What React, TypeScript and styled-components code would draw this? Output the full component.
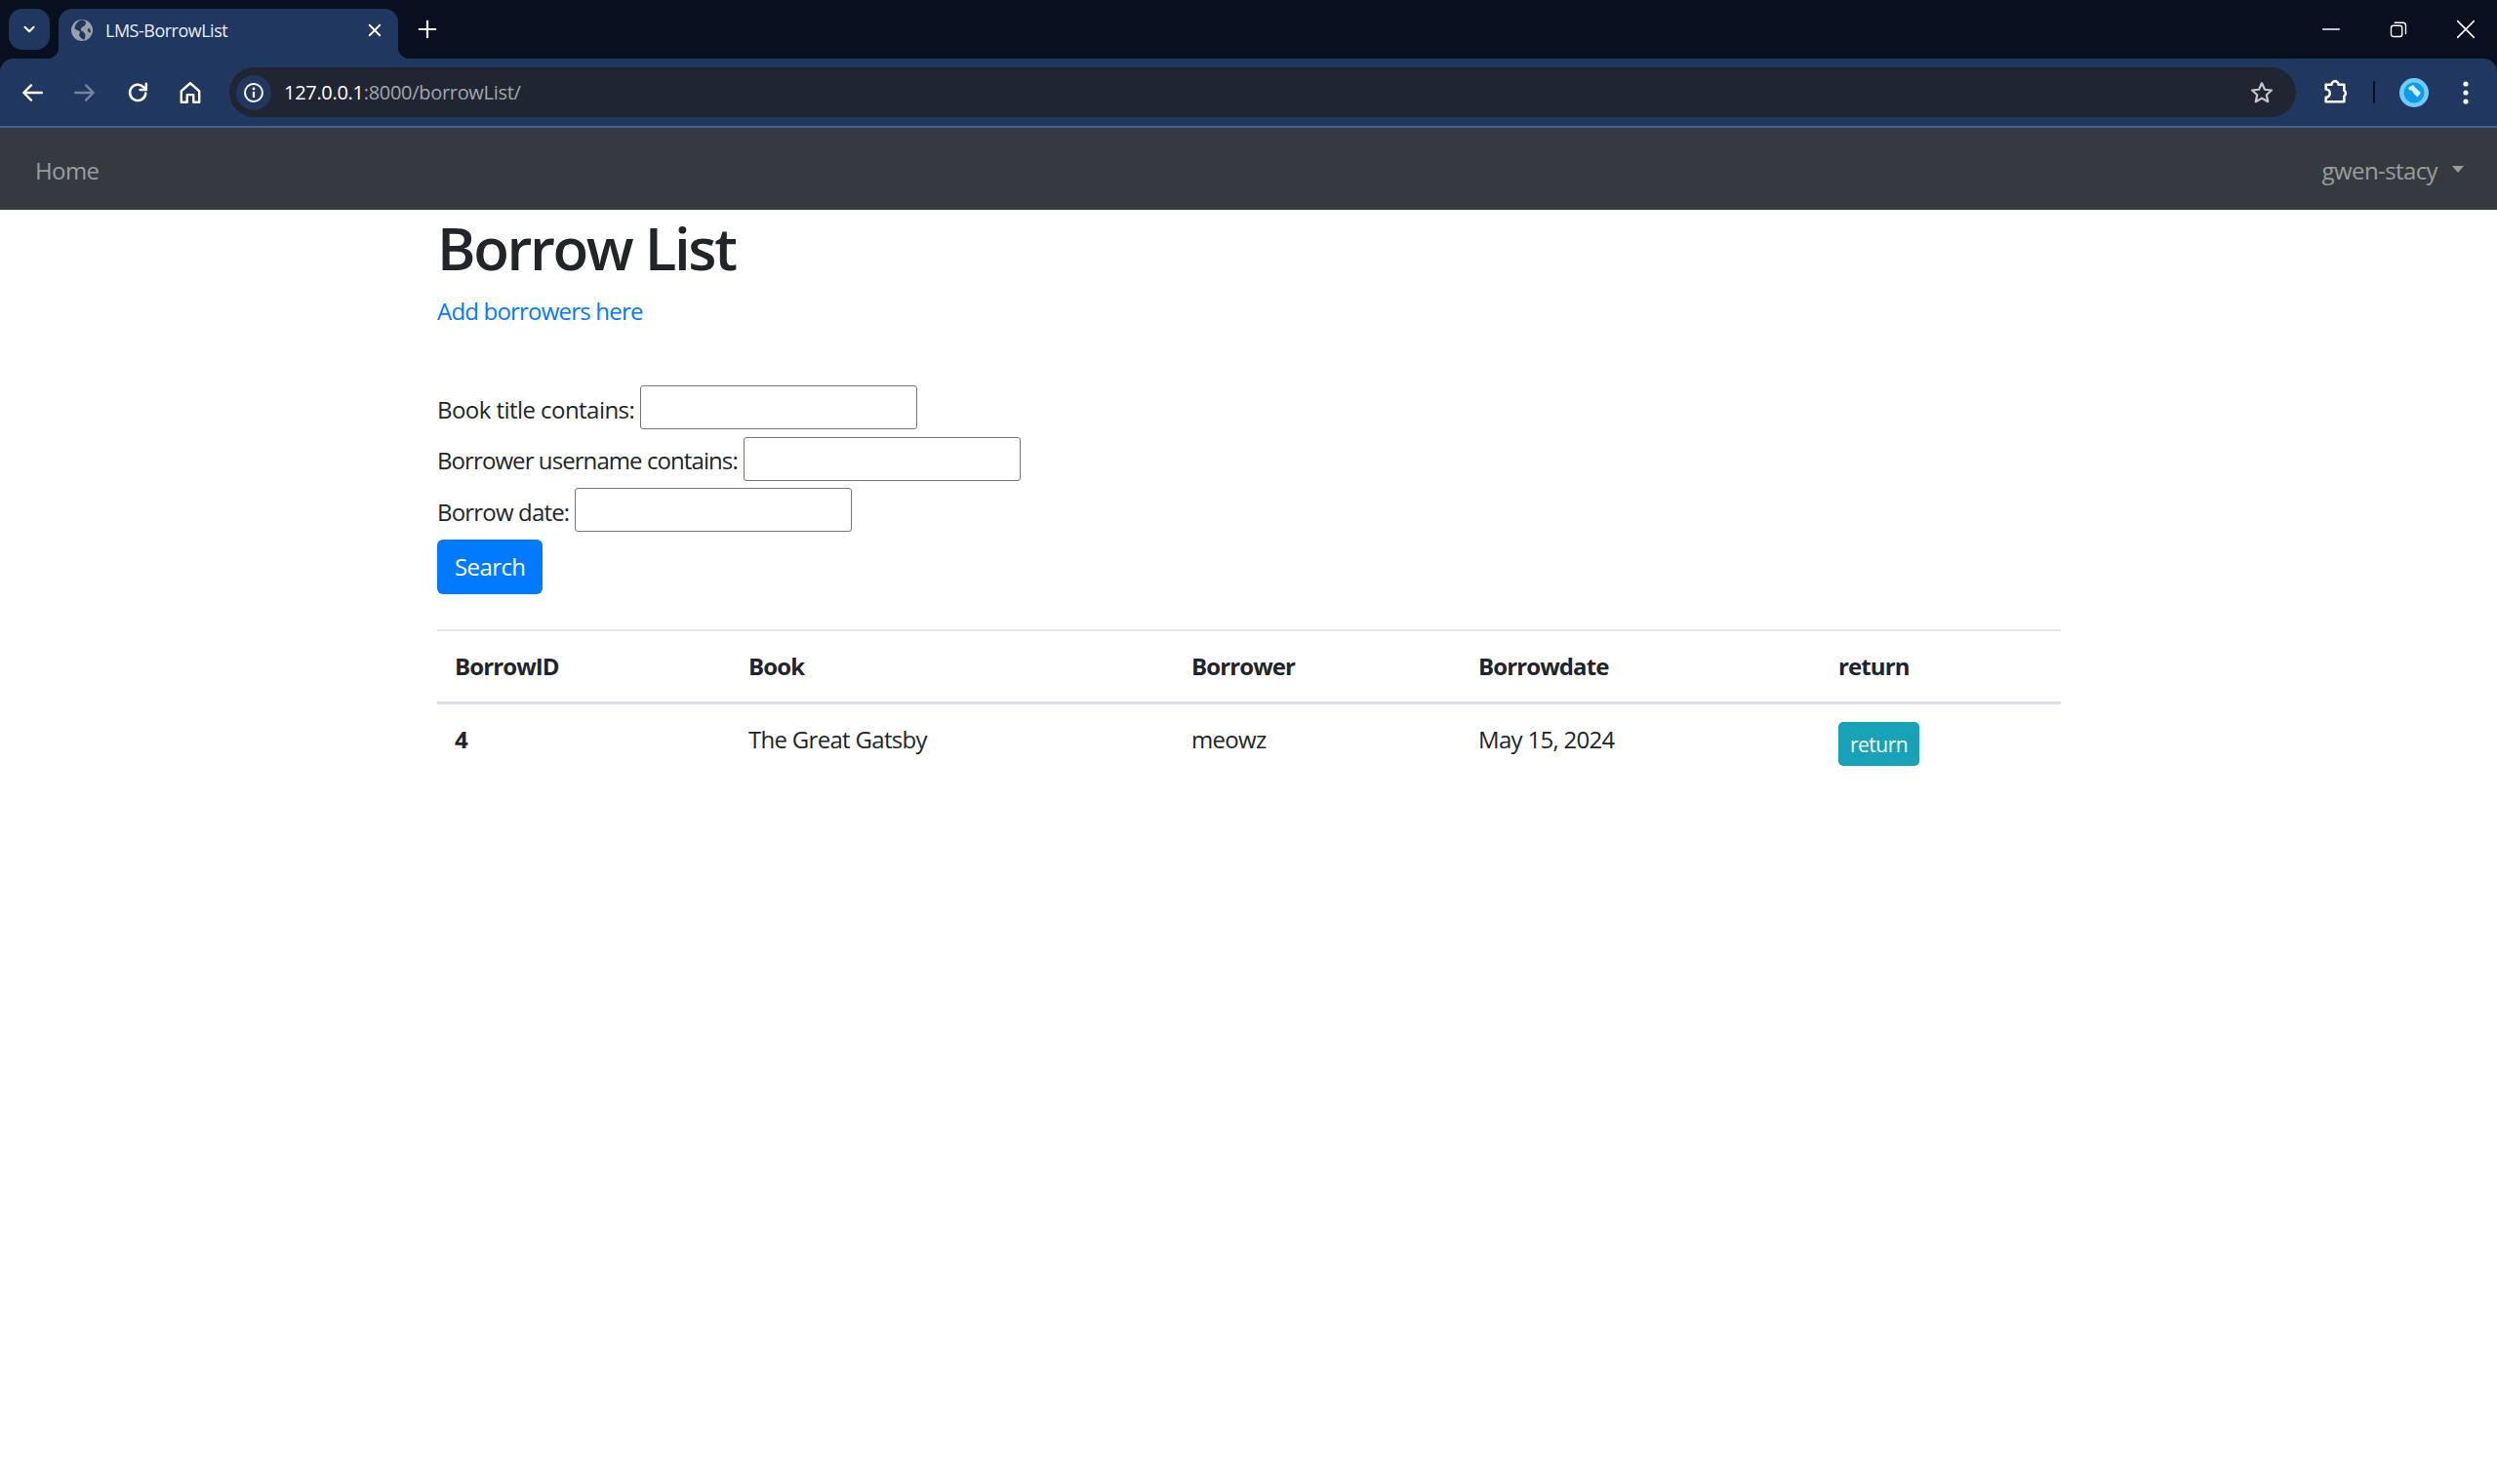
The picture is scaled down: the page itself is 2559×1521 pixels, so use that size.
import React from 'react';
import styled, { createGlobalStyle } from 'styled-components';

const GlobalStyle = createGlobalStyle`
   html, body {
      margin: 0;
      padding: 0;
      background: #fff;
   }

   body {
      font-family: "Open Sans", "Noto Sans", sans-serif;
      font-size: 24px;
      line-height: 36px;
      color: #212529;
   }
`;

const TabStrip = styled.div`
   height: 60px;
   display: flex;
   align-items: flex-start;
   padding: 9px 0 0 9px;
   box-sizing: border-box;
   background: #080f1e;
   color: #fff;
`;

const TabSearchButton = styled.div`
   width: 42px;
   height: 42px;
   display: flex;
   align-items: center;
   justify-content: center;
   background: #20375f;
   border-radius: 14px;
   margin-right: 9px;
`;

const Tab = styled.div`
   width: 348px;
   height: 51px;
   display: flex;
   align-items: center;
   box-sizing: border-box;
   padding: 0 15px 8px 13px;
   background: #20375f;
   border-radius: 14px 14px 0 0;
   position: relative;

   &::before, &::after {
      content: '';
      position: absolute;
      bottom: 0;
      width: 12px;
      height: 12px;
   }

   &::before {
      left: -12px;
      background: radial-gradient(circle at 0 0, transparent 12px, #20375f 12.5px);
   }

   &::after {
      right: -12px;
      background: radial-gradient(circle at 100% 0, transparent 12px, #20375f 12.5px);
   }
`;

const TabTitle = styled.span`
   flex: 1;
   margin-left: 13px;
   font-size: 18px;
   line-height: 22px;
   letter-spacing: -0.5px;
   color: #e8ecf4;
`;

const NewTabButton = styled.div`
   width: 36px;
   height: 42px;
   margin-left: 12px;
   display: flex;
   align-items: center;
   justify-content: center;
`;

const WindowControls = styled.div`
   margin-left: auto;
   display: flex;
   align-items: center;
   height: 42px;
`;

const WindowButton = styled.div`
   width: 69px;
   box-sizing: border-box;
   padding-left: 4px;
   display: flex;
   justify-content: center;
`;

const Toolbar = styled.div`
   height: 71px;
   display: flex;
   align-items: flex-start;
   box-sizing: border-box;
   padding: 9px 5px 0 6px;
   background: #20375f;
   border-bottom: 2px solid #47618f;
   border-radius: 14px 14px 0 0;
`;

const ToolbarShell = styled.div`
   background: #080f1e;
`;

const NavButton = styled.div`
   width: 54px;
   height: 51px;
   flex: none;
   display: flex;
   align-items: center;
   justify-content: center;
`;

const ExtensionButton = styled(NavButton)`
   margin-left: 13px;
`;

const MenuButton = styled(NavButton)`
   margin-left: 11px;
`;

const Omnibox = styled.div`
   flex: 1;
   height: 51px;
   margin-left: 13px;
   display: flex;
   align-items: center;
   box-sizing: border-box;
   padding: 0 22px 0 7px;
   background: #1f2531;
   border-radius: 26px;
`;

const InfoChip = styled.div`
   width: 36px;
   height: 36px;
   display: flex;
   align-items: center;
   justify-content: center;
   background: #20375f;
   border-radius: 50%;
`;

const Url = styled.div`
   flex: 1;
   margin-left: 13px;
   font-size: 20px;
   line-height: 24px;
   letter-spacing: -0.3px;
   color: #a3a7ae;

   b {
      font-weight: 400;
      color: #fff;
   }
`;

const ToolbarEnd = styled.div`
   width: 201px;
   height: 51px;
   flex: none;
   display: flex;
   align-items: center;
`;

const ToolbarDivider = styled.div`
   width: 2px;
   height: 23px;
   flex: none;
   margin: 0 25px 0 12px;
   background: #080f1e;
`;

const AvatarIcon = styled.svg`
   flex: none;
`;

const NavBar = styled.nav`
   height: 84px;
   display: flex;
   align-items: center;
   justify-content: space-between;
   box-sizing: border-box;
   padding: 3px 34px 0 36px;
   background: #343a40;
   color: rgba(255, 255, 255, 0.5);
`;

const NavLink = styled.a`
   display: flex;
   align-items: center;
   letter-spacing: -0.6px;
`;

const Caret = styled.span`
   width: 0;
   height: 0;
   margin: 0 0 2px 15px;
   border-top: 7px solid rgba(255, 255, 255, 0.5);
   border-left: 6.5px solid transparent;
   border-right: 6.5px solid transparent;
`;

const Container = styled.main`
   width: 1665px;
   box-sizing: border-box;
   padding-left: 1px;
   margin: 0 auto;
`;

const Title = styled.h1`
   margin: 0 0 10.5px;
   padding-top: 3px;
   font-size: 60px;
   line-height: 72px;
   font-weight: 600;
   letter-spacing: -2.35px;
`;

const AddLink = styled.a`
   display: block;
   margin-bottom: 58.5px;
   color: #007bff;
   letter-spacing: -0.8px;
`;

const FilterForm = styled.form`
   display: flex;
   flex-direction: column;
   align-items: flex-start;
   gap: 7.5px;
`;

const FilterRow = styled.label<{ $tracking: number }>`
   display: flex;
   align-items: center;
   gap: 6px;
   letter-spacing: ${props => props.$tracking}px;

   span {
      padding-top: 4px;
   }
`;

const FilterInput = styled.input`
   width: 284px;
   height: 45px;
   box-sizing: border-box;
   border: 1.5px solid #767676;
   border-radius: 3px;
   background: #fff;
`;

const SearchButton = styled.button`
   height: 56px;
   margin-top: 0.5px;
   padding: 0 18px;
   border: 0;
   border-radius: 6px;
   background: #007bff;
   color: #fff;
   font: inherit;
   letter-spacing: -0.6px;
`;

const Table = styled.table`
   width: 100%;
   margin-top: 36px;
   border-collapse: collapse;
   table-layout: fixed;
`;

const HeadCell = styled.th`
   padding: 18px;
   border-top: 2px solid #e4e6e9;
   border-bottom: 3px solid #dee2e6;
   text-align: left;
   font-weight: 700;
   letter-spacing: -0.9px;
`;

const Cell = styled.td<{ $strong?: boolean }>`
   padding: 18px;
   vertical-align: top;
   font-weight: ${props => (props.$strong ? 700 : 400)};
   letter-spacing: -0.7px;
`;

const ReturnButton = styled.button`
   display: block;
   height: 45px;
   padding: 0 12px;
   border: 0;
   border-radius: 5px;
   background: #17a2b8;
   color: #fff;
   font-family: inherit;
   font-size: 21px;
   letter-spacing: -0.5px;
`;

const columns = [301, 454, 294, 369, 246];
const headings = ['BorrowID', 'Book', 'Borrower', 'Borrowdate', 'return'];

const Glyph = ({ size = 24, stroke = '#fff', width = 2, children }: { size?: number; stroke?: string; width?: number; children: React.ReactNode }) => (
   <svg width={size} height={size} viewBox="0 0 24 24" fill="none" stroke={stroke} strokeWidth={width} strokeLinecap="round" strokeLinejoin="round">
      {children}
   </svg>
);

const App = () => {
   return (
      <>
         <GlobalStyle />
         <TabStrip>
            <TabSearchButton>
               <Glyph size={18} width={2.8}><path d="M6 9l6 6 6-6" /></Glyph>
            </TabSearchButton>
            <Tab>
               <svg width="22" height="22" viewBox="0 0 22 22">
                  <circle cx="11" cy="11" r="11" fill="#9aa0a8" />
                  <path d="M9 1C5 3 3 7 4 10c2 1 4 1 5 3l-1 3c1 2 3 4 5 5 2-3 2-6 0-8-3-1-4-3-2-5 2-1 4-2 4-6-2-1-4-2-6-1zM19 9c-2 0-3 1-2 3 1 1 2 2 3 1z" fill="#20375f" />
               </svg>
               <TabTitle>LMS-BorrowList</TabTitle>
               <Glyph size={18} width={2.6}><path d="M5 5l14 14M19 5L5 19" /></Glyph>
            </Tab>
            <NewTabButton>
               <Glyph size={22} width={2.4}><path d="M12 3v18M3 12h18" /></Glyph>
            </NewTabButton>
            <WindowControls>
               <WindowButton><Glyph size={20} width={1.8}><path d="M2 12h20" /></Glyph></WindowButton>
               <WindowButton>
                  <Glyph size={18} width={1.8}>
                     <rect x="2" y="7" width="15" height="15" rx="3" />
                     <path d="M7 3h11a4 4 0 0 1 4 4v11" />
                  </Glyph>
               </WindowButton>
               <WindowButton><Glyph size={20} width={1.9}><path d="M2 2l20 20M22 2L2 22" /></Glyph></WindowButton>
            </WindowControls>
         </TabStrip>
         <ToolbarShell>
            <Toolbar>
               <NavButton>
                  <Glyph size={26} width={2.2}><path d="M21 12H4M11 5l-7 7 7 7" /></Glyph>
               </NavButton>
               <NavButton>
                  <Glyph size={26} width={2.2} stroke="#75849f"><path d="M3 12h17M13 5l7 7-7 7" /></Glyph>
               </NavButton>
               <NavButton>
                  <Glyph size={25} width={2.4}>
                     <path d="M19.5 13a7.8 7.8 0 1 1-2.3-6.2L20 9.5" />
                     <path d="M20 3.5v6h-6" />
                  </Glyph>
               </NavButton>
               <NavButton>
                  <Glyph size={26} width={2.2}>
                     <path d="M3.5 10.5L12 3l8.5 7.5V21H15v-7H9v7H3.5z" />
                  </Glyph>
               </NavButton>
               <Omnibox>
                  <InfoChip>
                     <svg width="22" height="22" viewBox="0 0 22 22" fill="none">
                        <circle cx="11" cy="11" r="9" stroke="#fff" strokeWidth="2" />
                        <path d="M11 10v6" stroke="#fff" strokeWidth="2.2" />
                        <circle cx="11" cy="7" r="1.4" fill="#fff" />
                     </svg>
                  </InfoChip>
                  <Url><b>127.0.0.1</b>:8000/borrowList/</Url>
                  <Glyph size={26} stroke="#c4c7cc" width={2}>
                     <path d="M12 3l2.8 6 6.4.7-4.8 4.4 1.4 6.4L12 17.2l-5.8 3.3 1.4-6.4-4.8-4.4L9.2 9z" />
                  </Glyph>
               </Omnibox>
               <ToolbarEnd>
                  <ExtensionButton>
                     <Glyph size={28} width={2.2}>
                        <path d="M4 5h5a3 3 0 0 1 6 0h5v5a3 3 0 0 1 0 5v5H4v-4a3.5 3.5 0 0 0 0-7z" />
                     </Glyph>
                  </ExtensionButton>
                  <ToolbarDivider />
                  <AvatarIcon width="30" height="30" viewBox="0 0 30 30">
                     <circle cx="15" cy="15" r="15" fill="#6dcbff" />
                     <circle cx="15" cy="15" r="10.5" fill="#0f9be6" />
                     <path d="M9 10l5-3 3 3.5 5 4.5-3.5 4.5-4.5-4.5-1-2.5-2.5 0z" fill="#dcefff" />
                  </AvatarIcon>
                  <MenuButton>
                     <svg width="8" height="26" viewBox="0 0 8 26">
                        <circle cx="4" cy="4" r="2.6" fill="#fff" />
                        <circle cx="4" cy="13" r="2.6" fill="#fff" />
                        <circle cx="4" cy="22" r="2.6" fill="#fff" />
                     </svg>
                  </MenuButton>
               </ToolbarEnd>
            </Toolbar>
         </ToolbarShell>
         <NavBar>
            <NavLink>Home</NavLink>
            <NavLink>gwen-stacy<Caret /></NavLink>
         </NavBar>
         <Container>
            <Title>Borrow List</Title>
            <AddLink>Add borrowers here</AddLink>
            <FilterForm>
               <FilterRow $tracking={-0.55}><span>Book title contains:</span><FilterInput type="text" /></FilterRow>
               <FilterRow $tracking={-0.92}><span>Borrower username contains:</span><FilterInput type="text" /></FilterRow>
               <FilterRow $tracking={-0.82}><span>Borrow date:</span><FilterInput type="text" /></FilterRow>
               <SearchButton type="button">Search</SearchButton>
            </FilterForm>
            <Table>
               <colgroup>
                  {columns.map(width => <col key={width} width={width} />)}
               </colgroup>
               <thead>
                  <tr>
                     {headings.map(heading => <HeadCell key={heading}>{heading}</HeadCell>)}
                  </tr>
               </thead>
               <tbody>
                  <tr>
                     <Cell $strong>4</Cell>
                     <Cell>The Great Gatsby</Cell>
                     <Cell>meowz</Cell>
                     <Cell>May 15, 2024</Cell>
                     <Cell><ReturnButton type="button">return</ReturnButton></Cell>
                  </tr>
               </tbody>
            </Table>
         </Container>
      </>
   );
};

export default App;
